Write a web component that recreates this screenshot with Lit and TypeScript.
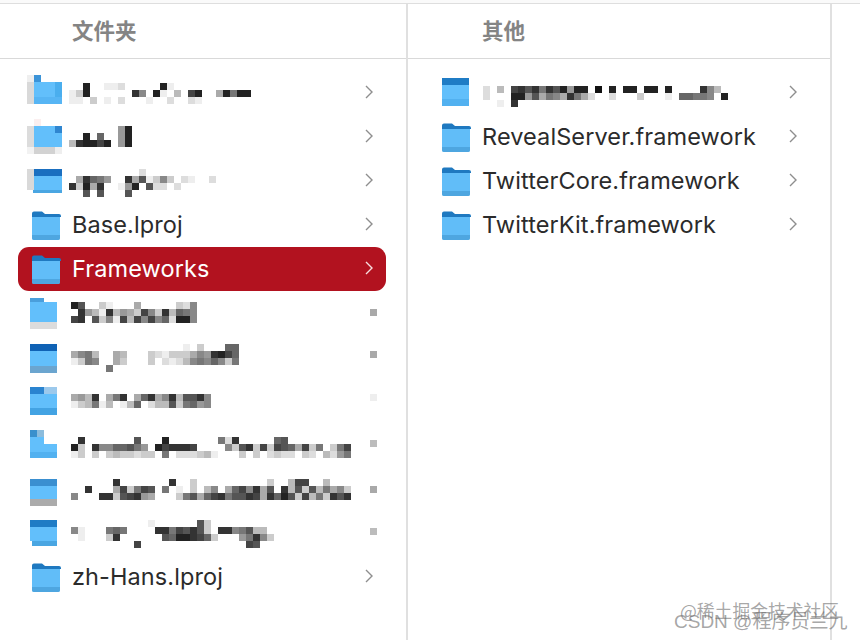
import { LitElement, html, css, svg, nothing } from "lit";
import { customElement } from "lit/decorators.js";

type R = [number, number, number, number, string];
type Row = {
  icon: R[] | null;
  label?: string;
  mos?: { dx: number; y: number; rows: string[] };
  dot?: string;
  dotY?: number;
};

const B = "#62bffb";
const rowsLeft: Row[] = [
  {
    icon: [
      [3, 5, 7, 7, "#efefef"], [10, 5, 7, 7, "#3c94d8"], [3, 12, 7, 22, "#d9d9d9"],
      [10, 12, 21, 22, B], [31, 12, 7, 22, "#4aaeee"], [10, 27, 28, 7, "#57b5f4"],
    ],
    mos: { dx: -4, y: 13, rows: [
      "ff2ffeedfffff2effffffffff",
      "ec2ffffff38f2efbf42ffa2722",
      "eefcfefdfffeffdffdefffffff",
    ] },
  },
  {
    icon: [
      [10, 5, 7, 7, "#fbefef"], [3, 12, 7, 21, "#dcdcdc"], [10, 12, 28, 21, B],
      [31, 12, 7, 7, "#2f86d0"], [10, 33, 21, 7, "#d2d2d2"], [31, 33, 7, 7, "#eeeeee"], [3, 33, 7, 7, "#f2f2f2"],
    ],
    mos: { dx: -4, y: 12, rows: [
      "fffffff92",
      "ff2f6ff92",
      "b32242f92",
    ] },
  },
  {
    icon: [
      [3, 11, 7, 21, "#d9d9d9"], [10, 11, 28, 7, "#1a6fc0"], [10, 18, 28, 14, B], [9, 32, 29, 3, "#4aa6e2"],
    ],
    mos: { dx: -4, y: 11, rows: [
      "ffffffffffdfffffffff",
      "fa3679ff3a5ec8cfdeffdf",
      "3c2a3ffe92f5ddfdffffff",
      "ff5f5fff5fffffffffffff",
    ] },
  },
  { icon: null, label: "Base.lproj" },
  { icon: null, label: "Frameworks" },
  {
    icon: [
      [6, 8, 14, 4, "#4a9fdc"], [6, 12, 27, 20, B], [6, 32, 27, 7, "#dcdcdc"],
    ],
    mos: { dx: -2, y: 12, rows: [
      "25ffcefffafffffcd8",
      "f39be3b9ac48c3b678",
      "43f5c8e4b48486d228",
    ] },
    dot: "#a9a9a9",
    dotY: 19,
  },
  {
    icon: [
      [6, 10, 27, 7, "#0f62b5"], [6, 17, 27, 15, B], [6, 32, 27, 7, "#6ba5cf"],
    ],
    mos: { dx: -2, y: 10, rows: [
      "ffffffffffffffffefcfff66",
      "a87bffabfffcdeccca893246",
      "ec78ffacfffcfdedb87868c7",
      "fffff7ffffffffffffffffff",
    ] },
    dot: "#a9a9a9",
    dotY: 17,
  },
  {
    icon: [
      [6, 9, 14, 7, "#2a84d0"], [20, 9, 13, 7, "#9cc9ec"], [6, 16, 27, 14, B], [6, 30, 27, 7, "#43a3e3"],
    ],
    mos: { dx: -2, y: 16, rows: [
      "a9b3fa73fa63a83b5538",
      "ecb7ebfeb6fdbb5c7698",
    ] },
    dot: "#eeeeee",
    dotY: 16,
  },
  {
    icon: [
      [6, 8, 7, 7, "#3a90cc"], [13, 8, 7, 7, "#8cbcdc"], [6, 15, 14, 7, B], [6, 22, 27, 14, B], [6, 30, 27, 6, "#52b1f0"],
    ],
    mos: { dx: -2, y: 15, rows: [
      "f3fffffff5fff2fffffff7d3fffff65fffffffff",
      "2cf38866579f243334ffff8c53c4c456a4c7fc74",
      "ecfcfcbccdccf7fdddcbefffcfcfdcddfcdfbd97",
    ] },
    dot: "#bcbcbc",
    dotY: 18,
  },
  {
    icon: [
      [6, 13, 27, 7, "#3a8fd0"], [6, 20, 27, 13, B], [6, 33, 27, 7, "#ababab"],
    ],
    mos: { dx: -2, y: 13, rows: [
      "ffffff3fffffff3ffcffffffffffcffb44ffbfff",
      "ff3fffa4c745f7fefcfb8fa6483a5f3b5c5b7a8c",
      "8fff33c5439afffc75a64375534a3625c4b7c353",
    ] },
    dot: "#a9a9a9",
    dotY: 20,
  },
  {
    icon: [
      [6, 10, 27, 7, "#1f7cc5"], [6, 17, 27, 14, B], [8, 31, 25, 5, "#4aa6e2"],
    ],
    mos: { dx: -2, y: 10, rows: [
      "fffffffffffeffffff5cfffffffff",
      "8efff767ffff3374535cf33875bbf",
      "fefffc3ffffff562234 6cfff9738c".replace(" ", ""),
      "fffffffff4fffffffffffffff45ff",
    ] },
    dot: "#bcbcbc",
    dotY: 18,
  },
  { icon: null, label: "zh-Hans.lproj" },
];

const rowsRight: Row[] = [
  {
    icon: [
      [8, 8, 27, 7, "#1f7cc5"], [8, 15, 27, 14, B], [8, 29, 27, 7, "#52b1f0"],
    ],
    mos: { dx: 0, y: 16, rows: [
      "dfbf43537352922f1f2f22f22f2ffff38bf",
      "dfff2295a78a37adffdfffcfffef66778f2",
      "ffef3fffffffffffffffffffffffffffff",
    ] },
  },
  { icon: null, label: "RevealServer.framework" },
  { icon: null, label: "TwitterCore.framework" },
  { icon: null, label: "TwitterKit.framework" },
];

const folder = svg`
  <path d="M8 11.5a2 2 0 0 1 2-2h8l3 2.5h14a2 2 0 0 1 2 2V15H8z" fill="#1f79c0"/>
  <path d="M8 15h28v21a2 2 0 0 1-2 2H10a2 2 0 0 1-2-2z" fill="#61bdf8"/>
  <path d="M8 33h28v3a2 2 0 0 1-2 2H10a2 2 0 0 1-2-2z" fill="#4ea6e0"/>`;

const grey = (c: string) => {
  const v = parseInt(c, 16) * 17;
  return `rgb(${v},${v},${v})`;
};

@customElement("app-root")
export class AppRoot extends LitElement {
  static styles = css`
    :host {
      display: block;
      position: relative;
      width: 860px;
      height: 640px;
      overflow: hidden;
      background: #fff;
      font-family: Inter, "Noto Sans CJK SC", sans-serif;
    }
    .top {
      height: 3px;
      background: #fafafa;
      border-bottom: 1px solid #dedede;
    }
    .cols {
      display: flex;
      height: 636px;
    }
    .col {
      box-sizing: border-box;
      border-right: 2px solid #e0e0e0;
      height: 100%;
    }
    .left { width: 408px; }
    .right { width: 424px; }
    .head {
      box-sizing: border-box;
      height: 55px;
      border-bottom: 1px solid #d9d9d9;
      display: flex;
      align-items: center;
      font: 700 21.5px "Noto Sans CJK SC", sans-serif;
      color: #848484;
      padding-bottom: 3px;
    }
    .left .head { padding-left: 72px; }
    .right .head { padding-left: 74px; }
    .list { padding-top: 11px; }
    .left .list { padding-left: 18px; width: 368px; }
    .right .list { padding-left: 20px; width: 382px; }
    .row {
      position: relative;
      display: flex;
      align-items: center;
      height: 44px;
      padding-left: 6px;
      color: #2b2b2b;
      font-size: 23.5px;
      letter-spacing: 0.1px;
    }
    .row.sel {
      height: 42px;
      margin: 1px 0 -1px;
      padding-bottom: 2px;
      background: #b2121f;
      border-radius: 11px;
      color: #fff;
    }
    .row span { margin-left: -1px; }
    .row svg { flex: none; display: block; }
    .ico { width: 40px; height: 44px; margin-right: 9px; filter: blur(0.35px); }
    .mos { height: 44px; filter: blur(0.4px); }
    .end {
      margin-left: auto;
      margin-right: 13px;
      width: 8px;
      height: 14px;
    }
    .dot {
      position: absolute;
      left: 352px;
      width: 7px;
      height: 7px;
    }
    .wm {
      position: absolute;
      white-space: nowrap;
      font-family: "Noto Sans CJK SC", sans-serif;
      color: rgba(110, 110, 110, 0.62);
    }
    .wm1 { left: 680px; top: 597px; font-size: 17.8px; }
    .wm2 { left: 674px; top: 606px; font-size: 19px; font-family: "Liberation Sans", "Noto Sans CJK SC", sans-serif; }
  `;

  private mosaic(m: NonNullable<Row["mos"]>) {
    const w = Math.max(...m.rows.map((r) => r.length)) * 7;
    return html`<svg
      class="mos"
      width=${w}
      viewBox="0 0 ${w} 44"
      style="margin-left:${m.dx}px"
    >
      ${m.rows.map((r, j) =>
        [...r].map((c, i) =>
          c === "f"
            ? nothing
            : svg`<rect x=${i * 7} y=${m.y + j * 7} width="7" height="7" fill=${grey(c)} />`,
        ),
      )}
    </svg>`;
  }

  private row(r: Row, selected: boolean) {
    return html`<div class="row ${selected ? "sel" : ""}">
      <svg class="ico" viewBox="0 0 40 44">
        ${r.icon
          ? r.icon.map(
              ([x, y, w, h, f]) => svg`<rect x=${x} y=${y} width=${w} height=${h} fill=${f} />`,
            )
          : folder}
      </svg>
      ${r.mos ? this.mosaic(r.mos) : html`<span>${r.label}</span>`}
      ${r.dot
        ? html`<svg class="dot" style="top:${r.dotY}px" viewBox="0 0 7 7">
            <rect width="7" height="7" fill=${r.dot} />
          </svg>`
        : html`<svg class="end" viewBox="0 0 8 14">
            <path
              d="M1 1l6 6-6 6"
              fill="none"
              stroke=${selected ? "#f6dede" : "#8e8e8e"}
              stroke-width="1.4"
            />
          </svg>`}
    </div>`;
  }

  render() {
    return html`
      <div class="top"></div>
      <div class="cols">
        <div class="col left">
          <div class="head">文件夹</div>
          <div class="list">${rowsLeft.map((r) => this.row(r, r.label === "Frameworks"))}</div>
        </div>
        <div class="col right">
          <div class="head">其他</div>
          <div class="list">${rowsRight.map((r) => this.row(r, false))}</div>
        </div>
      </div>
      <div class="wm wm1">@稀土掘金技术社区</div>
      <div class="wm wm2">CSDN @程序员兰九</div>
    `;
  }
}
